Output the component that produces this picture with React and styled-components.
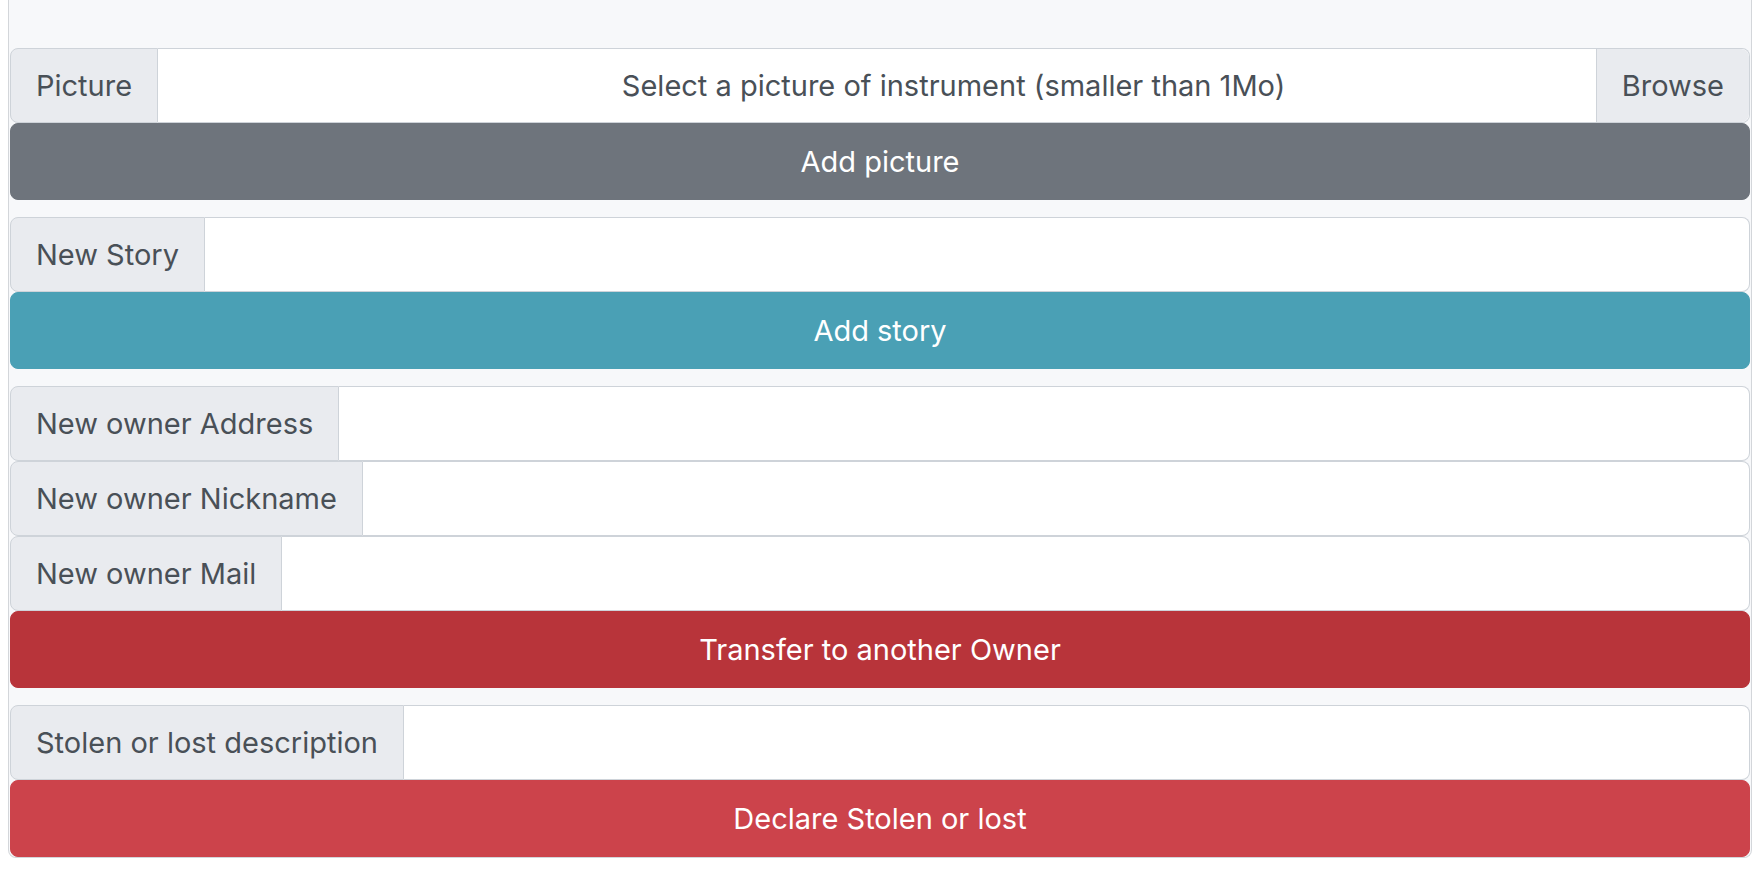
import React from "react"
import styled, { createGlobalStyle } from "styled-components"

const GlobalStyle = createGlobalStyle`
  body {
    margin: 0;
    background: #ffffff;
    font-family: Inter, "Noto Sans", sans-serif;
  }
  * {
    box-sizing: border-box;
  }
`

const colors = {
  secondary: "#6e747c",
  info: "#4aa0b5",
  dangerDark: "#b8343a",
  danger: "#cc434b",
}

const Card = styled.div`
  margin: 0 8px;
  padding: 48px 1px 0;
  background: #f7f8fa;
  border: 1px solid #d3d6da;
  border-top: none;
  border-radius: 0 0 8px 8px;
`

const Section = styled.div`
  margin-bottom: 17px;

  &:last-child {
    margin-bottom: 0;
  }
`

const InputGroup = styled.div`
  display: flex;
  height: 75px;
`

const Label = styled.div`
  display: flex;
  align-items: center;
  padding: 0 25px;
  background: #e9ebef;
  border: 1px solid #ced3d9;
  border-radius: 8px 0 0 8px;
  color: #495057;
  font-size: 29px;
  white-space: nowrap;
`

const Field = styled.input`
  flex: 1;
  min-width: 0;
  height: 100%;
  padding: 0 25px;
  background: #ffffff;
  border: 1px solid #ced3d9;
  border-left: none;
  border-radius: 0 8px 8px 0;
  font: inherit;
  font-size: 29px;
  color: #495057;
  outline: none;
`

const FileBox = styled.div`
  position: relative;
  flex: 1;
  display: flex;
  align-items: center;
  justify-content: center;
  background: #ffffff;
  border: 1px solid #ced3d9;
  border-left: none;
  border-radius: 0 8px 8px 0;
  color: #495057;
  font-size: 29px;
  white-space: nowrap;

  &::after {
    content: "Browse";
    position: absolute;
    top: 0;
    right: 0;
    bottom: 0;
    display: flex;
    align-items: center;
    padding: 0 25px;
    background: #e9ebef;
    border-left: 1px solid #ced3d9;
    border-radius: 0 8px 8px 0;
  }
`

const Button = styled.button`
  display: flex;
  align-items: center;
  justify-content: center;
  width: 100%;
  height: 77px;
  margin: 0;
  padding: 0;
  border: 1px solid ${(p) => p.$bg};
  border-radius: 8px;
  background: ${(p) => p.$bg};
  color: #ffffff;
  font-family: inherit;
  font-size: 29px;
  cursor: pointer;
`

const TextRow = ({ label }) => (
  <InputGroup>
    <Label>{label}</Label>
    <Field type="text" />
  </InputGroup>
)

export default function App() {
  return (
    <>
      <GlobalStyle />
      <Card>
        <Section>
          <InputGroup>
            <Label>Picture</Label>
            <FileBox>Select a picture of instrument (smaller than 1Mo)</FileBox>
          </InputGroup>
          <Button $bg={colors.secondary}>Add picture</Button>
        </Section>
        <Section>
          <TextRow label="New Story" />
          <Button $bg={colors.info}>Add story</Button>
        </Section>
        <Section>
          <TextRow label="New owner Address" />
          <TextRow label="New owner Nickname" />
          <TextRow label="New owner Mail" />
          <Button $bg={colors.dangerDark}>Transfer to another Owner</Button>
        </Section>
        <Section>
          <TextRow label="Stolen or lost description" />
          <Button $bg={colors.danger}>Declare Stolen or lost</Button>
        </Section>
      </Card>
    </>
  )
}
